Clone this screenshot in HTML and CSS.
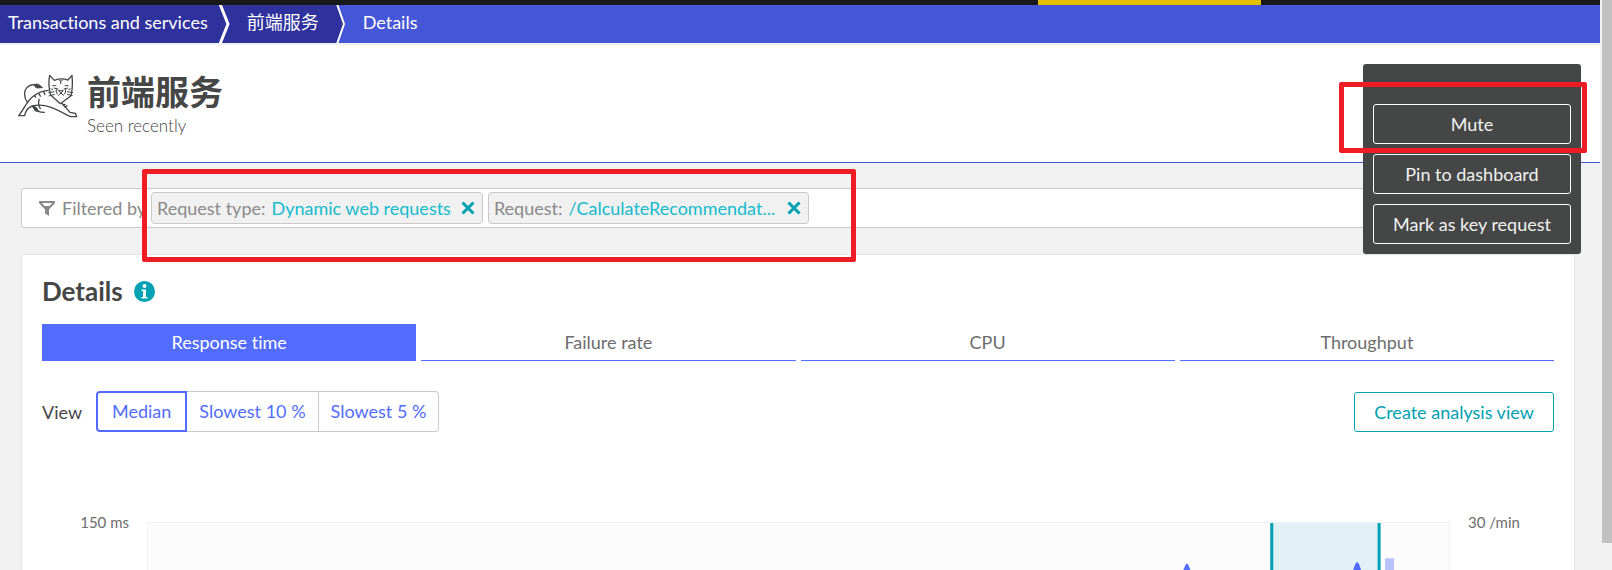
FILE: index.html
```html
<!DOCTYPE html>
<html lang="en">
<head>
  <meta charset="UTF-8">
  <meta name="viewport" content="width=device-width, initial-scale=1.0">
  <title>前端服务 - Details</title>
  <link rel="stylesheet" href="styles.css">
</head>
<body>
  <div class="page">
    <div class="topbar"><div class="topbar-mark"></div></div>

    <nav class="crumbs">
      <a class="crumb dark" href="#">Transactions and services</a>
      <svg class="chevron" viewBox="0 0 12 38"><path d="M1 -1L9 19L1 39" fill="none" stroke="#fff" stroke-width="3"/></svg>
      <a class="crumb dark second" href="#">前端服务</a>
      <svg class="chevron last" viewBox="0 0 12 38"><path d="M1 -1L8 19L1 39H13V-1Z" fill="#4556d7"/><path d="M1 -1L8 19L1 39" fill="none" stroke="#fff" stroke-width="2"/></svg>
      <a class="crumb current" href="#">Details</a>
    </nav>

    <header class="header">
      <svg class="logo" viewBox="50 40 183 135" fill="none" stroke="#454646" stroke-width="4" stroke-linejoin="round">
        <path d="M145 92C118 94 96 108 82 127C74 139 68 151 55 168H73C76 151 84 143 96 139C135 130 166 147 202 167L211 171H229L225 161L209 158L184 130"/>
        <path d="M148 47C144 67 145 86 151 106L180 132L212 108C217 87 217 67 215 47L203 61Q182 54 162 62Z"/>
        <path d="M83 131C70 114 69 93 82 82Q94 71 112 78"/>
        <path d="M103 74C112 70 119 76 127 84C118 84 111 88 104 82Z" fill="#454646" stroke-width="2"/>
        <path d="M96 139Q108 142 113 153Q121 159 132 158Q119 158 105 153Z" fill="#454646"/>
        <path d="M117 117Q111 135 121 148M101 106L107 114M115 101L121 111M130 96L134 106M187 136L196 134M193 143L201 138"/>
        <path d="M176 60L181 66L188 60M181 63V73M156 78H168M193 78H205M160 85L174 88M190 88L203 85M174 93H189L182 100ZM182 100L174 108M182 100L190 108M168 88Q165 98 172 104M195 88Q199 98 191 104" stroke-width="3"/>
        <path d="M144 99L162 96M145 109L163 104M200 96L218 99M200 104L217 108M151 87L158 90M211 87L204 90" stroke-width="3"/>
      </svg>
      <div>
        <h1>前端服务</h1>
        <p class="seen">Seen recently</p>
      </div>
    </header>

    <main class="content">
      <div class="filter">
        <svg class="funnel" viewBox="0 0 16 15"><path fill="#898989" fill-rule="evenodd" d="M0 0H16V2L10 8.500V15L6 12.500V8.500L0 2ZM3 2L5.500 5H10.500L13 2Z"/></svg>
        <span class="filter-label">Filtered by</span>
        <span class="chip">Request type: <a href="#">Dynamic web requests</a>
          <button class="remove" aria-label="Remove request type"><svg viewBox="0 0 14 14"><path d="M1.500 1.500L12.500 12.500M12.500 1.500L1.500 12.500"/></svg></button>
        </span>
        <span class="chip">Request: <a class="request" href="#">/CalculateRecommendat...</a>
          <button class="remove" aria-label="Remove request"><svg viewBox="0 0 14 14"><path d="M1.500 1.500L12.500 12.500M12.500 1.500L1.500 12.500"/></svg></button>
        </span>
      </div>

      <section class="card">
        <div class="card-title">
          <h2>Details</h2>
          <svg class="info" viewBox="0 0 21 21"><circle cx="10.500" cy="10.500" r="10.500" fill="#00a1b2"/><circle cx="10.500" cy="5" r="2" fill="#fff"/><path d="M7.500 8.500H12V16H13.500V17.500H7.500V16H9V10H7.500Z" fill="#fff"/></svg>
        </div>

        <div class="tabs">
          <button class="tab active">Response time</button>
          <button class="tab">Failure rate</button>
          <button class="tab">CPU</button>
          <button class="tab">Throughput</button>
        </div>

        <div class="toolbar">
          <span class="view-label">View</span>
          <div class="group">
            <button class="selected">Median</button>
            <button>Slowest 10 %</button>
            <button>Slowest 5 %</button>
          </div>
          <button class="create">Create analysis view</button>
        </div>

        <div class="chart">
          <span class="axis left">150 ms</span>
          <div class="plot">
            <svg viewBox="0 0 1303 48" preserveAspectRatio="none">
              <rect x="1124" y="0" width="110" height="48" fill="#e2f1f6"/>
              <path d="M1037 48L1039 43Q1040.500 40 1042 43L1044 48ZM1207 48L1209 42Q1211 38 1213 42L1215 48Z" fill="#526cff"/>
              <path d="M1125.500 0V48M1233 0V48" stroke="#00a1b2" stroke-width="3"/>
              <rect x="1239" y="36" width="9" height="12" fill="#b9c4ff"/>
            </svg>
          </div>
          <span class="axis">30 /min</span>
        </div>
      </section>
    </main>

    <div class="menu">
      <button>Mute</button>
      <button>Pin to dashboard</button>
      <button>Mark as key request</button>
    </div>
    <div class="mark mark-filter"></div>
    <div class="mark mark-mute"></div>
  </div>
  <div class="scrollbar"><div class="thumb"></div></div>
</body>
</html>
```
FILE: styles.css
```css
* {
  box-sizing: border-box;
}
body {
  margin: 0;
  display: flex;
  height: 100vh;
  overflow: hidden;
  background: #f1f1f1;
  color: #454646;
  font-family: Lato, "Noto Sans CJK SC", sans-serif;
  font-size: 18px;
  line-height: 24px;
  font-variant-ligatures: none;
}
button {
  font: inherit;
  font-variant-ligatures: none;
  cursor: pointer;
}
a {
  color: inherit;
  text-decoration: none;
}
.page {
  position: relative;
  flex: 1;
  display: flex;
  flex-direction: column;
}
.topbar {
  height: 5px;
  background: #191919;
}
.topbar-mark {
  width: 13.9%;
  height: 5px;
  margin-left: 64.9%;
  background: #e6be00;
}

/* breadcrumbs */
.crumbs {
  display: flex;
  height: 38px;
  margin-bottom: 2px;
  background: #4556d7;
  color: #fff;
}
.crumb {
  padding: 5px 11px 9px 8px;
}
.crumb.dark {
  background: #2f329d;
}
.crumb.second {
  padding-left: 16px;
  padding-right: 17px;
}
.crumb.current {
  padding-left: 15px;
}
.chevron {
  width: 12px;
  height: 38px;
  background: #2f329d;
}

/* title */
.header {
  display: flex;
  gap: 9px;
  height: 118px;
  padding: 28px 17px 0;
  background: #fff;
  border-bottom: 1px solid #4556d7;
}
.logo {
  width: 61px;
  height: 45px;
}
h1 {
  margin: 0;
  font-size: 34px;
  line-height: 38px;
}
.seen {
  margin: 3px 0 0;
  font-size: 17px;
  font-weight: 300;
}

.content {
  flex: 1;
  display: flex;
  flex-direction: column;
  padding: 25px 25px 0 21px;
}
.filter {
  display: flex;
  align-items: center;
  height: 40px;
  padding-left: 17px;
  background: #fff;
  border: 1px solid #c9c9c9;
  border-radius: 3px;
  color: #898989;
}
.funnel {
  width: 16px;
  height: 15px;
  margin-right: 7px;
}
.filter-label {
  width: 89px;
}
.chip {
  display: flex;
  align-items: center;
  gap: 6px;
  height: 32px;
  margin-right: 5px;
  padding: 0 7px 0 5px;
  background: #f1f1f1;
  border: 1px solid #c9c9c9;
  border-radius: 4px;
}
.chip a {
  color: #14bbcd;
}
.request {
  margin-right: 2px;
}
.remove {
  display: flex;
  margin-left: 4px;
  padding: 0;
  border: 0;
  background: none;
}
.remove svg {
  width: 14px;
  height: 14px;
  stroke: #00a1b2;
  stroke-width: 3;
}

.card {
  flex: 1;
  margin-top: 26px;
  padding: 20px 20px 0;
  background: #fff;
  border: 1px solid #e6e6e6;
  border-bottom: 0;
  border-radius: 3px 3px 0 0;
}
.card-title {
  display: flex;
  align-items: center;
  gap: 11px;
}
h2 {
  margin: 0;
  font-size: 26px;
  line-height: 32px;
}
.info {
  width: 21px;
  height: 21px;
}
.tabs {
  display: grid;
  grid-template-columns: repeat(4, 1fr);
  gap: 5px;
  margin-top: 17px;
}
.tab {
  height: 37px;
  padding: 0 0 1px;
  border: 0;
  border-bottom: 1px solid #526cff;
  background: none;
  color: #6d6d6d;
}
.tab.active {
  background: #526cff;
  color: #fff;
}

.toolbar {
  display: flex;
  align-items: center;
  margin-top: 30px;
}
.view-label {
  width: 54px;
}
.group {
  display: flex;
}
.group button {
  height: 41px;
  padding: 0 12px 2px;
  border: 1px solid #c9c9c9;
  border-left: 0;
  background: #fff;
  color: #526cff;
}
.group button:last-child {
  border-radius: 0 4px 4px 0;
}
.group .selected {
  padding: 0 14px 2px;
  border: 2px solid #526cff;
  border-radius: 4px 0 0 4px;
}
.create {
  width: 200px;
  height: 40px;
  margin-left: auto;
  padding: 0;
  border: 1px solid #00a1b2;
  border-radius: 3px;
  background: #fff;
  color: #00a1b2;
}

.chart {
  display: flex;
  margin-top: 90px;
}
.axis {
  width: 104px;
  margin-top: -12px;
  padding-left: 18px;
  font-size: 15px;
  color: #6d6d6d;
}
.axis.left {
  width: 105px;
  padding: 0 18px 0 0;
  text-align: right;
}
.plot {
  flex: 1;
  height: 48px;
  background: #fcfcfc;
  border: 2px solid #f1f1f1;
  border-width: 1px 1px 0;
}
.plot svg {
  display: block;
  width: 100%;
  height: 100%;
}

/* action menu and highlights */
.menu {
  position: absolute;
  top: 64px;
  right: 19px;
  display: flex;
  flex-direction: column;
  gap: 10px;
  width: 218px;
  padding: 40px 10px 10px;
  background: #454646;
  border-radius: 3px;
}
.menu button {
  height: 40px;
  padding: 0;
  border: 1px solid #fff;
  border-radius: 3px;
  background: none;
  color: #f2f2f2;
}
.mark {
  position: absolute;
  border: 5px solid #ee1c25;
  border-radius: 2px;
  pointer-events: none;
}
.mark-filter {
  top: 169px;
  left: 142px;
  width: 714px;
  height: 93px;
}
.mark-mute {
  top: 82px;
  right: 13px;
  width: 248px;
  height: 71px;
}
.scrollbar {
  width: 12px;
  padding-left: 2px;
}
.thumb {
  height: 543px;
  background: #c1c1c1;
}
```
